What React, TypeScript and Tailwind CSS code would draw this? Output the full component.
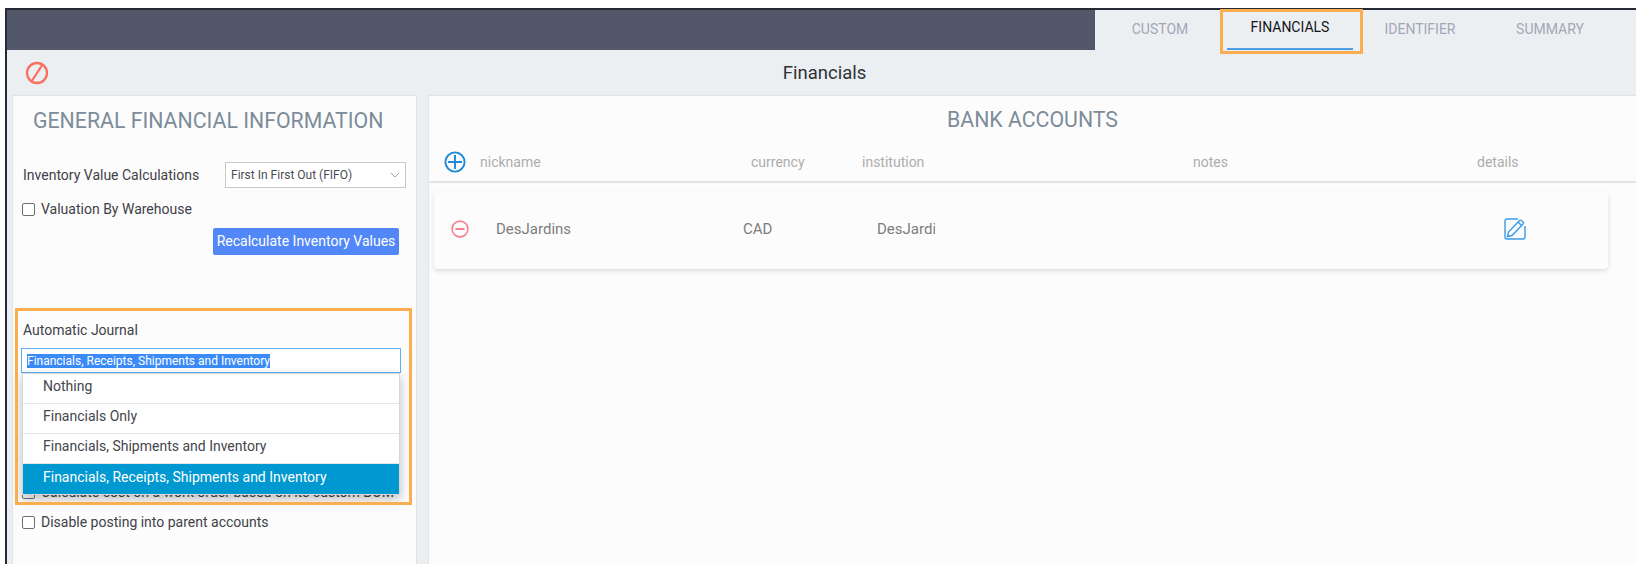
import { ChevronDown } from "lucide-react"

const tabs = [
  { label: "CUSTOM" },
  { label: "FINANCIALS", active: true },
  { label: "IDENTIFIER" },
  { label: "SUMMARY" },
]

const journalOptions = ["Nothing", "Financials Only", "Financials, Shipments and Inventory"]

function BlockIcon() {
  return (
    <svg width="24" height="24" viewBox="0 0 24 24" fill="none" stroke="#f8705f" strokeWidth="2.3">
      <circle cx="12" cy="12" r="10" />
      <path d="M17.5 3.5 L6.5 20.5" />
    </svg>
  )
}

function AddIcon() {
  return (
    <svg width="22" height="22" viewBox="0 0 22 22" fill="none" stroke="#1b8ad8" strokeWidth="1.9">
      <circle cx="11" cy="11" r="9.6" />
      <path d="M11 4v14M4 11h14" />
    </svg>
  )
}

function RemoveIcon() {
  return (
    <svg width="18" height="18" viewBox="0 0 18 18" fill="none" stroke="#f5808f" strokeWidth="1.6">
      <circle cx="9" cy="9" r="7.9" />
      <path d="M4.5 9h9" strokeWidth="2" />
    </svg>
  )
}

function EditIcon() {
  return (
    <svg width="22" height="22" viewBox="0 0 22 22" fill="none" stroke="#3a9be6" strokeWidth="1.4">
      <path d="M14 1H3a2 2 0 0 0-2 2v16a2 2 0 0 0 2 2h16a2 2 0 0 0 2-2V8" />
      <path d="M3.5 18.5l1-4.5L15.5 2.5a1.4 1.4 0 0 1 2 0l1.5 1.5a1.4 1.4 0 0 1 0 2L8 17.5z" />
      <path d="M14 4l3.5 3.5" />
    </svg>
  )
}

function Check({ label, className }: { label: string; className?: string }) {
  return (
    <label className={`flex items-center gap-[6px] whitespace-nowrap text-[14px] text-[#3f4148] ${className ?? ""}`}>
      <span className="h-[13px] w-[13px] shrink-0 rounded-[2px] border border-[#6f6f6f] bg-white" />
      {label}
    </label>
  )
}

export default function App() {
  return (
    <div className="h-[564px] w-[1636px] overflow-hidden bg-white pl-[5px] pt-2 font-['Roboto',sans-serif]">
      <div className="relative h-[556px] border-l-2 border-t-2 border-[#262a36] bg-[#eceff1]">
        {/* top bar */}
        <div className="flex h-[40px] bg-[#525769]">
          <div className="ml-auto flex w-[541px] bg-[#eceff1]">
            {tabs.map((tab) => (
              <div key={tab.label} className="flex w-[130px] px-[2px]">
                <div
                  className={`flex flex-1 items-center justify-center text-[14px] ${
                    tab.active ? "border-b-2 border-[#4f9de4] pb-[3px] text-[#14151c]" : "pb-[1px] text-[#a3a7b6]"
                  }`}
                >
                  {tab.label}
                </div>
              </div>
            ))}
          </div>
        </div>

        {/* sub header */}
        <div className="relative flex h-[45px] items-center justify-center pt-[2px] text-[18.5px] text-[#2f3138]">
          <div className="absolute left-[18px] top-[11px]">
            <BlockIcon />
          </div>
          <span className="ml-[6px]">Financials</span>
        </div>

        <div className="flex h-[471px] gap-[11px] pl-[5px]">
          {/* general panel */}
          <div className="w-[405px] border border-b-0 border-[#e0e4e8] bg-[#fcfcfc]">
            <h2 className="pl-[20px] pt-[10px] text-[21.3px] leading-[30px] text-[#7c8c9a]">
              GENERAL FINANCIAL INFORMATION
            </h2>
            <div className="mt-[26px] flex items-center pl-[10px]">
              <span className="w-[202px] text-[14px] text-[#3f4148]">Inventory Value Calculations</span>
              <div className="flex h-[26px] w-[181px] items-center justify-between border border-[#c9c9c9] bg-white pl-[5px] pr-[2px] text-[12px] text-[#4b4d55]">
                First In First Out (FIFO)
                <ChevronDown size={16} strokeWidth={1} className="text-[#777]" />
              </div>
            </div>
            <Check label="Valuation By Warehouse" className="mt-[11px] pl-[9px]" />
            <div className="mt-[8px] flex justify-end pr-[17px]">
              <button className="h-[27px] w-[186px] rounded-[2px] bg-[#5287f8] text-[14px] text-white">
                Recalculate Inventory Values
              </button>
            </div>
            <div className="pl-[10px] pt-[65px] text-[14px] text-[#3f4148]">Automatic Journal</div>
            <div className="ml-[8px] mt-[7px] flex h-[25px] w-[380px] items-center border border-[#63aeef] bg-white pl-[5px]">
              <span className="bg-[#3a8bf7] text-[12px] leading-[14px] text-white">
                Financials, Receipts, Shipments and Inventory
              </span>
            </div>
            <Check label="Calculate cost on a work order based on its custom BOM" className="ml-[9px] mt-[109px]" />
            <Check label="Disable posting into parent accounts" className="mt-[9px] gap-[5px] pl-[9px]" />
          </div>

          {/* bank accounts panel */}
          <div className="flex-1 border-l border-t border-[#e0e4e8] bg-[#fcfcfc]">
            <h2 className="pt-[10px] text-center text-[21.3px] leading-[28px] text-[#7c8c9a]">BANK ACCOUNTS</h2>
            <div className="flex h-[49px] items-center border-b-2 border-[#e3e3e3] pl-[15px] pt-[9px] text-[14px] text-[#adadad]">
              <AddIcon />
              <span className="ml-[14px] w-[271px]">nickname</span>
              <span className="w-[111px]">currency</span>
              <span className="w-[331px]">institution</span>
              <span className="w-[284px]">notes</span>
              <span>details</span>
            </div>
            <div className="ml-[5px] mr-[28px] mt-[8px] flex h-[78px] items-center rounded-[4px] bg-[#fcfcfc] pb-[2px] pl-[17px] text-[15px] text-[#7d7d7d] shadow-[0_2px_5px_rgba(0,0,0,0.12)]">
              <RemoveIcon />
              <span className="ml-[27px] w-[247px]">DesJardins</span>
              <span className="w-[134px]">CAD</span>
              <span className="w-[58px] overflow-hidden whitespace-nowrap">DesJardins</span>
              <span className="ml-[569px]">
                <EditIcon />
              </span>
            </div>
          </div>
        </div>

        {/* open dropdown over the journal field */}
        <div className="absolute left-[15px] top-[363px] w-[378px] border border-[#d8d8d8] bg-white text-[14px] text-[#44464d] shadow-[0_4px_10px_rgba(0,0,0,0.25)]">
          {journalOptions.map((option) => (
            <div key={option} className="flex h-[30px] items-center border-b border-[#e6e6e6] pb-[4px] pl-[20px]">
              {option}
            </div>
          ))}
          <div className="flex h-[30px] items-center bg-[#0098d0] pb-[4px] pl-[20px] text-white">
            Financials, Receipts, Shipments and Inventory
          </div>
        </div>

        {/* annotation boxes */}
        <div className="absolute left-[8px] top-[298px] h-[197px] w-[397px] border-[3px] border-[#fbae4f]" />
        <div className="absolute left-[1213px] top-[-1px] h-[45px] w-[143px] border-[3px] border-[#fbae4f]" />
      </div>
    </div>
  )
}
